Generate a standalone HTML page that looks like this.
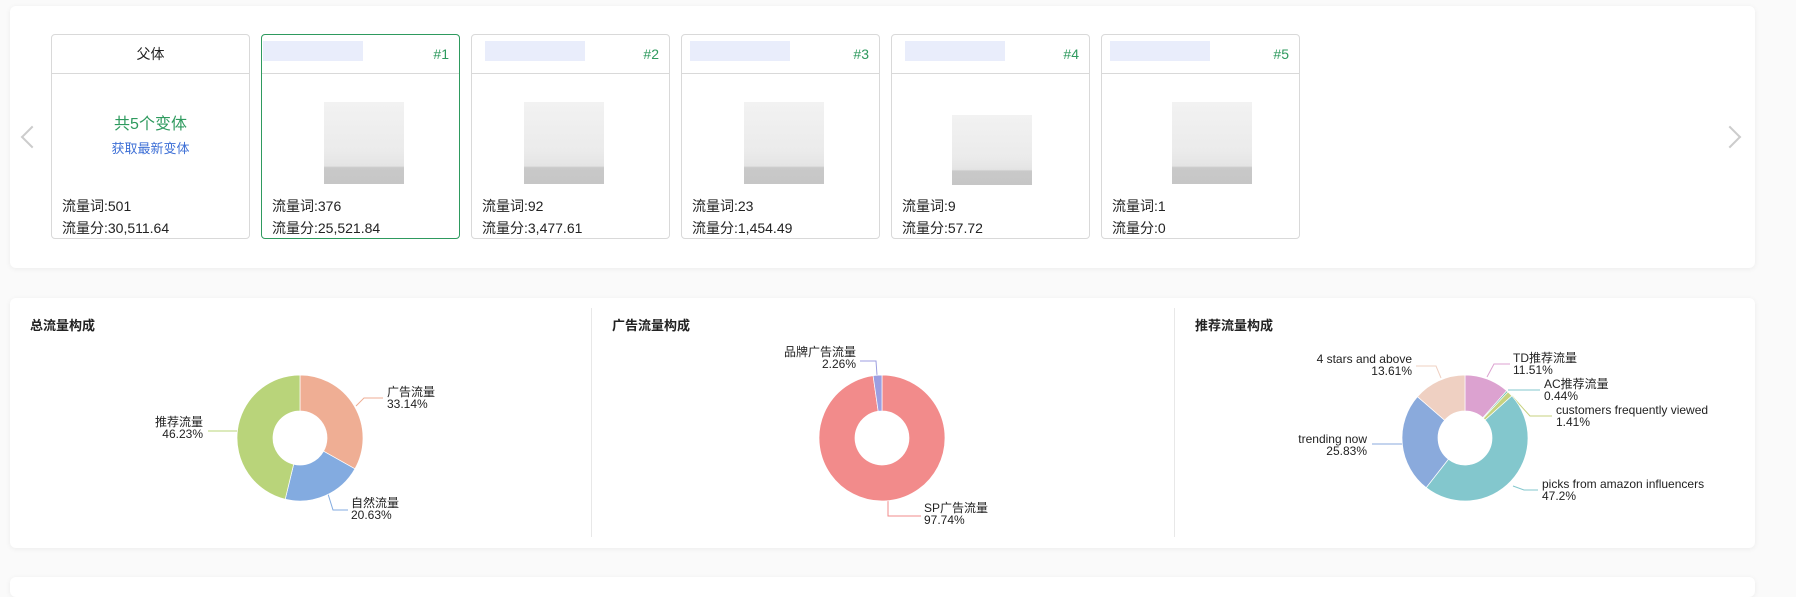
<!DOCTYPE html>
<html><head><meta charset="utf-8"><style>
*{margin:0;padding:0;box-sizing:border-box}
body{width:1796px;height:580px;background:#fafafa;position:relative;overflow:hidden;font-family:"Liberation Sans","Noto Sans CJK SC",sans-serif;color:#222}
.card{position:absolute;background:#fff;border-radius:6px;box-shadow:0 1px 6px rgba(0,0,0,.06)}
.v{position:absolute;top:34px;width:199px;height:205px;border:1px solid #d9d9d9;border-radius:4px;background:#fff}
.v .h{height:39px;border-bottom:1px solid #d9d9d9;font-size:14px;line-height:38px;text-align:right;padding-right:10px;color:#2e9a5e}
.v .t{position:absolute;left:10px;font-size:14px;color:#222}
.bl{position:absolute;background:#e9edfb}
.img{position:absolute;top:67px;width:80px;height:82px;background:linear-gradient(#f2f2f2,#ebebeb 60%,#e4e4e4 78%,#c9c9c9 80%,#c6c6c6)}
.arrow{position:absolute;width:16px;height:16px;border-left:2px solid #ccc;border-bottom:2px solid #ccc}
.ttl{position:absolute;top:315px;font-size:13px;font-weight:bold}
.lb{position:absolute;font-size:12px;line-height:12px;color:#222;white-space:nowrap}
.r{text-align:right}
</style></head><body>
<div class="card" style="left:10px;top:6px;width:1745px;height:262px"></div>
<div class="arrow" style="left:24px;top:129px;transform:rotate(45deg)"></div>
<div class="arrow" style="left:1722px;top:129px;transform:rotate(-135deg)"></div>

<div class="v" style="left:51px"><div class="h" style="text-align:center;padding:0;color:#222">父体</div>
<div style="position:absolute;top:75px;width:100%;text-align:center;color:#2e9a5e;font-size:16px">共5个变体</div>
<div style="position:absolute;top:103px;width:100%;text-align:center;color:#3d6fd6;font-size:13px">获取最新变体</div>
<div class="t" style="top:161px">流量词:501</div><div class="t" style="top:183px">流量分:30,511.64</div></div>

<div class="v" style="left:261px;border-color:#2e9a5e"><div class="h">#1</div><div class="img" style="left:62px"></div>
<div class="t" style="top:161px">流量词:376</div><div class="t" style="top:183px">流量分:25,521.84</div></div>
<div class="v" style="left:471px"><div class="h">#2</div><div class="img" style="left:52px"></div>
<div class="t" style="top:161px">流量词:92</div><div class="t" style="top:183px">流量分:3,477.61</div></div>
<div class="v" style="left:681px"><div class="h">#3</div><div class="img" style="left:62px"></div>
<div class="t" style="top:161px">流量词:23</div><div class="t" style="top:183px">流量分:1,454.49</div></div>
<div class="v" style="left:891px"><div class="h">#4</div><div class="img" style="left:60px;top:80px;height:70px"></div>
<div class="t" style="top:161px">流量词:9</div><div class="t" style="top:183px">流量分:57.72</div></div>
<div class="v" style="left:1101px"><div class="h">#5</div><div class="img" style="left:70px"></div>
<div class="t" style="top:161px">流量词:1</div><div class="t" style="top:183px">流量分:0</div></div>
<div class="bl" style="left:263px;top:41px;width:100px;height:20px"></div>
<div class="bl" style="left:485px;top:41px;width:100px;height:20px"></div>
<div class="bl" style="left:690px;top:41px;width:100px;height:20px"></div>
<div class="bl" style="left:905px;top:41px;width:100px;height:20px"></div>
<div class="bl" style="left:1110px;top:41px;width:100px;height:20px"></div>

<div class="card" style="left:10px;top:298px;width:1745px;height:250px"></div>
<div style="position:absolute;left:591px;top:308px;width:1px;height:229px;background:#e8e8e8"></div>
<div style="position:absolute;left:1174px;top:308px;width:1px;height:229px;background:#e8e8e8"></div>
<div class="card" style="left:10px;top:577px;width:1745px;height:20px"></div>
<div class="ttl" style="left:30px">总流量构成</div>
<div class="ttl" style="left:612px">广告流量构成</div>
<div class="ttl" style="left:1195px">推荐流量构成</div>

<svg id="s" width="1796" height="580" style="position:absolute;left:0;top:0">
<g fill="none" stroke-width="1">
<path d="M356 406 L364 398 L383 398" stroke="#efae94"/>
<path d="M328 494 L333 510 L348 510" stroke="#83abe0"/>
<path d="M237 431 L208 431" stroke="#b9d47a"/>
<path d="M877 375 L876 361 L860 361" stroke="#9c9ee0"/>
<path d="M888 501 L888 516 L921 516" stroke="#f28b8b"/>
<path d="M1441 378 L1436 366 L1416 366" stroke="#efd0c2"/>
<path d="M1487 377 L1494 364 L1510 364" stroke="#dca2d0"/>
<path d="M1508 390 L1540 390" stroke="#83c7cd"/>
<path d="M1512 396 L1530 416 L1552 416" stroke="#c7d27f"/>
<path d="M1402 444 L1372 444" stroke="#8aaadc"/>
<path d="M1513 486 L1524 490 L1538 490" stroke="#83c7cd"/>
</g>
</svg>
<div class="lb" style="left:387px;top:386px">广告流量<br>33.14%</div>
<div class="lb r" style="left:143px;top:416px;width:60px">推荐流量<br>46.23%</div>
<div class="lb" style="left:351px;top:497px">自然流量<br>20.63%</div>
<div class="lb r" style="left:756px;top:346px;width:100px">品牌广告流量<br>2.26%</div>
<div class="lb" style="left:924px;top:502px">SP广告流量<br>97.74%</div>
<div class="lb r" style="left:1262px;top:353px;width:150px">4 stars and above<br>13.61%</div>
<div class="lb" style="left:1513px;top:352px">TD推荐流量<br>11.51%</div>
<div class="lb" style="left:1544px;top:378px">AC推荐流量<br>0.44%</div>
<div class="lb" style="left:1556px;top:404px">customers frequently viewed<br>1.41%</div>
<div class="lb r" style="left:1217px;top:433px;width:150px">trending now<br>25.83%</div>
<div class="lb" style="left:1542px;top:478px">picks from amazon influencers<br>47.2%</div>
<script>
var s=document.getElementById('s');
function donut(cx,cy,R,r,data){var a=-Math.PI/2;data.forEach(function(d){var b=a+d[0]/100*2*Math.PI;var l=(b-a)>Math.PI?1:0;
var p='M'+(cx+R*Math.cos(a))+' '+(cy+R*Math.sin(a))+' A'+R+' '+R+' 0 '+l+' 1 '+(cx+R*Math.cos(b))+' '+(cy+R*Math.sin(b))+' L'+(cx+r*Math.cos(b))+' '+(cy+r*Math.sin(b))+' A'+r+' '+r+' 0 '+l+' 0 '+(cx+r*Math.cos(a))+' '+(cy+r*Math.sin(a))+'Z';
var e=document.createElementNS('http://www.w3.org/2000/svg','path');e.setAttribute('d',p);e.setAttribute('fill',d[1]);e.setAttribute('stroke','#fff');e.setAttribute('stroke-width','0.7');s.appendChild(e);a=b;});}
donut(300,438,63,27,[[33.14,'#efae94'],[20.63,'#83abe0'],[46.23,'#b9d47a']]);
donut(882,438,63,27,[[97.74,'#f28b8b'],[2.26,'#9c9ee0']]);
donut(1465,438,63,27,[[11.51,'#dca2d0'],[0.44,'#6fc0b0'],[1.41,'#c7d27f'],[47.2,'#83c7cd'],[25.83,'#8aaadc'],[13.61,'#efd0c2']]);
</script>
</body></html>
